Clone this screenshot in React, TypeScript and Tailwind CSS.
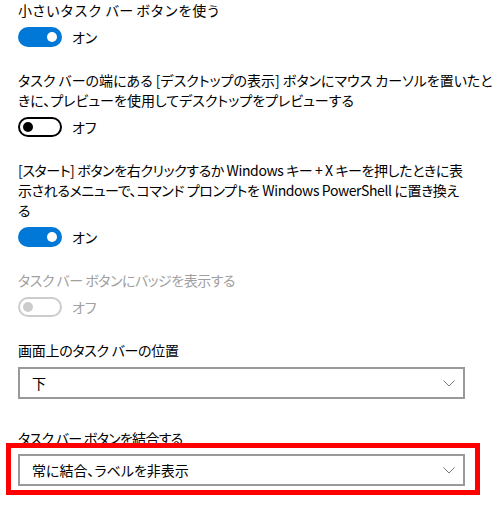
import React from "react";

const font = {
  fontFamily: '"Noto Sans CJK JP", "Noto Sans", sans-serif',
};

function Toggle({ state }: { state: "on" | "off" | "disabled" }) {
  if (state === "on") {
    return (
      <div className="relative h-[20px] w-[44px] rounded-full bg-[#0078d7]">
        <div className="absolute right-[5px] top-[5px] h-[10px] w-[10px] rounded-full bg-white" />
      </div>
    );
  }
  const c = state === "off" ? "border-black" : "border-[#cccccc]";
  const k = state === "off" ? "bg-black" : "bg-[#cccccc]";
  return (
    <div className={`relative h-[20px] w-[44px] rounded-full border-2 ${c}`}>
      <div className={`absolute left-[3px] top-[3px] h-[10px] w-[10px] rounded-full ${k}`} />
    </div>
  );
}

function ToggleRow({ state, label }: { state: "on" | "off" | "disabled"; label: string }) {
  return (
    <div className="mt-[7px] flex items-center gap-[10px]">
      <Toggle state={state} />
      <span
        className={`text-[14px] leading-[20px] ${state === "disabled" ? "text-[#a0a0a0]" : "text-black"}`}
      >
        {label}
      </span>
    </div>
  );
}

function Chevron() {
  return (
    <svg width="12" height="7" viewBox="0 0 12 7" className="shrink-0">
      <path d="M0.5 0.5 L6 6 L11.5 0.5" fill="none" stroke="#7a7a7a" strokeWidth="1" />
    </svg>
  );
}

function Dropdown({ value }: { value: string }) {
  return (
    <div className="flex h-[32px] w-[447px] items-center justify-between border-2 border-[#999999] bg-white pl-[12px] pr-[8px]">
      <span className="text-[14px] leading-[20px] text-black">{value}</span>
      <Chevron />
    </div>
  );
}

const noPalt = { fontFeatureSettings: "normal" };

export default function App() {
  return (
    <div
      className="h-[510px] w-[498px] overflow-hidden bg-white pl-[18px] text-black"
      style={{ ...font, fontFeatureSettings: '"palt"' }}
    >
      <div className="text-[14px] leading-[20px]">
        <div className="whitespace-nowrap" style={noPalt}>
          小さいタスク バー ボタンを使う
        </div>
      </div>
      <ToggleRow state="on" label="オン" />

      <div className="mt-[23px] text-[14px] leading-[20px]">
        <div className="whitespace-nowrap">
          タスク バーの端にある [デスクトップの表示] ボタンにマウス カーソルを置いたと
        </div>
        <div className="whitespace-nowrap">きに、プレビューを使用してデスクトップをプレビューする</div>
      </div>
      <ToggleRow state="off" label="オフ" />

      <div className="mt-[23px] text-[14px] leading-[20px] tracking-[-0.4px]">
        <div className="whitespace-nowrap">
          [スタート] ボタンを右クリックするか Windows キー + X キーを押したときに表
        </div>
        <div className="whitespace-nowrap">
          示されるメニューで、コマンド プロンプトを Windows PowerShell に置き換え
        </div>
        <div className="whitespace-nowrap">る</div>
      </div>
      <ToggleRow state="on" label="オン" />

      <div className="mt-[23px] text-[14px] leading-[20px] tracking-[-0.5px] text-[#a0a0a0]">
        <div className="whitespace-nowrap">タスク バー ボタンにバッジを表示する</div>
      </div>
      <ToggleRow state="disabled" label="オフ" />

      <div className="mt-[23px] text-[14px] leading-[20px] tracking-[-0.3px]">
        <div className="whitespace-nowrap">画面上のタスク バーの位置</div>
      </div>
      <div className="mt-[7px]">
        <Dropdown value="下" />
      </div>

      <div className="mt-[29px] text-[14px] leading-[20px] tracking-[-0.7px]">
        <div className="whitespace-nowrap">タスク バー ボタンを結合する</div>
      </div>
      <div className="relative mt-[6px]">
        <Dropdown value="常に結合、ラベルを非表示" />
        <div className="pointer-events-none absolute left-[-12px] top-[-11px] h-[52px] w-[474px] border-[5px] border-[#ff0000]" />
      </div>
    </div>
  );
}
